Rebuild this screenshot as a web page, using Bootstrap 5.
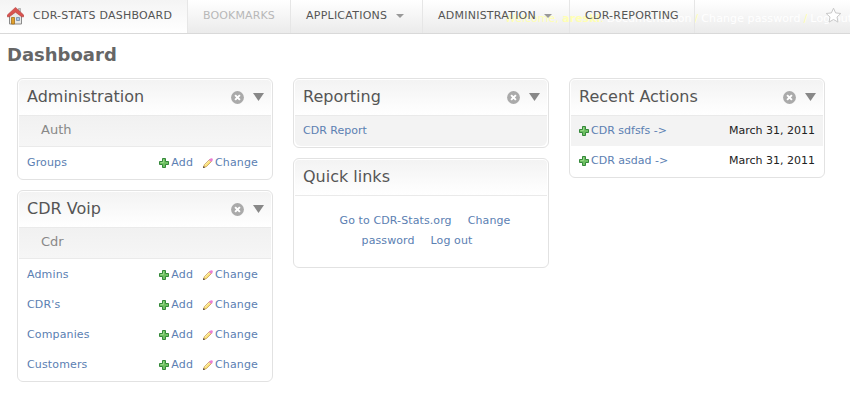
<!DOCTYPE html>
<html lang="en">
<head>
<meta charset="utf-8">
<title>CDR-Stats Dashboard</title>
<link href="https://cdn.jsdelivr.net/npm/bootstrap@5.3.0/dist/css/bootstrap.min.css" rel="stylesheet">
<style>
body{font-family:"DejaVu Sans",sans-serif;font-size:11px;line-height:16px;color:#222;background:#fff;overflow:hidden}
a{color:#5b80b2;text-decoration:none}
.topbar{height:34px;background:linear-gradient(#fff,#ebebeb);border-bottom:1px solid #d9d9d9;position:relative}
.topbar .nav-link{color:#555;padding:8px 15px 9px;height:33px;line-height:16px;border-right:1px solid #e6e6e6;white-space:nowrap;position:relative;z-index:1;letter-spacing:.24px}
.topbar .nav-link.home{width:188px;padding-left:7px;padding-right:0;background:linear-gradient(#f4f4f4,#fff)}
.topbar .nav-link.disabled{color:#b8b8b8;letter-spacing:.14px}
.home svg{margin:-1px 9px 0 0}
.w-book{width:103px}.w-apps{width:132px}.w-admin{width:147px}.w-rep{width:125px}
.caret{display:inline-block;border:4px solid transparent;border-top-color:#999;border-bottom:0;margin-left:9px;vertical-align:1px}
.w-admin .caret{margin-left:8px}
.user-tools{position:absolute;left:505px;top:11px;color:#ffffb3;white-space:nowrap;gap:3px}
.user-tools a{color:#fff}
.user-tools a+span+a{letter-spacing:.1px}
.star{position:absolute;right:8px;top:7px;z-index:2}
h1{font-size:18px;line-height:22px;font-weight:bold;color:#666;margin:10px 0 12px 7px}
.columns{padding-left:17px;gap:20px}
.column-stack{width:256px;gap:10px}
.module{border:1px solid #e2e2e2;border-radius:6px;padding:1px}
.module h2{height:36px;margin:0;padding:0 7px 0 8px;font-size:16px;line-height:20px;font-weight:normal;color:#555;background:linear-gradient(#f3f3f3,#fff);border-bottom:1px solid #eaeaea;border-radius:4px 4px 0 0}
.module h2 span{margin-top:-1px}
.module h2 .toggle{margin-left:9px;margin-top:-1px}
.module h3{height:31px;margin:0;padding:4px 22px;font-size:13px;line-height:20px;font-weight:normal;color:#888;background:linear-gradient(#f1f1f1,#f6f6f6);border-bottom:1px solid #eaeaea}
.item{height:30px;padding:0 8px}
.alt{background:#f3f3f3}
.model-list{padding-top:1px;letter-spacing:.14px}
.model-list .item{padding-right:13px}
.tools{gap:10px}
.item svg{margin-right:2px;flex:none}
.quick{height:70px;padding:15px 29px 0;line-height:20px;text-align:center;letter-spacing:.1px}
.quick a{margin:0 8px}
</style>
<script src="https://cdn.jsdelivr.net/npm/bootstrap@5.3.0/dist/js/bootstrap.bundle.min.js"></script>
</head>
<body>
<svg class="position-absolute" width="0" height="0" xmlns="http://www.w3.org/2000/svg">
  <symbol id="plus" viewBox="0 0 10 10"><path d="M3.5.5h3v3h3v3h-3v3h-3v-3h-3v-3h3z" fill="#6fc062" stroke="#35883b"/><path d="M4.500 1.500V4.500H1.500" fill="none" stroke="#98d888"/></symbol>
  <symbol id="pencil" viewBox="0 0 10 10"><path d="M.5 9.500L1.300 6.700 6.600 1.400 8.600 3.400 3.300 8.700z" fill="#fbe27a" stroke="#b98d4a" stroke-width=".7"/><path d="M1.800 7.100L6.800 2.100" stroke="#fff4b8" stroke-width=".8"/><path d="M5.900 1.900L7.500.500Q8.500-.200 9.400.600 10.200 1.500 9.500 2.500L8.100 4.100z" fill="#ea7ed2"/><path d="M0 10L.6 8 2 9.400z" fill="#43352b"/></symbol>
  <symbol id="close" viewBox="0 0 13 13"><circle cx="6.500" cy="6.500" r="6.400" fill="#aaa"/><path d="M4.100 4.100l4.800 4.800M8.900 4.100L4.100 8.900" stroke="#fff" stroke-width="2"/></symbol>
  <symbol id="down" viewBox="0 0 11 8"><path d="M0 0h11L5.500 8z" fill="#888"/></symbol>
</svg>
<nav class="topbar">
  <div class="nav flex-nowrap">
    <a class="nav-link home d-flex" href="#"><svg width="17" height="18" viewBox="0 0 17 18"><path d="M2.500 8.500L8.500 3l6 5.500V17h-12z" fill="#e9e9e7" stroke="#8b8b8b"/><path d="M11.500 1.500h2V5h-2z" fill="#c9c9c9" stroke="#999" stroke-width=".6"/><path d="M8.500.4L.3 8v1.800h2L8.500 5.200l6.200 4.600h2V8z" fill="#d9534f" stroke="#b03a38" stroke-width=".6"/><path d="M4.500 10.500h3V17h-3z" fill="#e0a02c" stroke="#a5701c" stroke-width=".8"/><path d="M9.500 10.500h3v3h-3z" fill="#a9c8ea" stroke="#6f89a8" stroke-width=".8"/></svg><span>CDR-STATS DASHBOARD</span></a>
    <a class="nav-link disabled w-book" href="#">BOOKMARKS</a>
    <a class="nav-link w-apps" href="#">APPLICATIONS<i class="caret"></i></a>
    <a class="nav-link w-admin" href="#">ADMINISTRATION<i class="caret"></i></a>
    <a class="nav-link w-rep" href="#">CDR-REPORTING</a>
  </div>
  <div class="user-tools d-flex"><span>Welcome, <b>areski</b>.</span><a href="#">Documentation</a><span>/</span><a href="#">Change password</a><span>/</span><a href="#">Log out</a></div>
  <svg class="star" width="17" height="17" viewBox="0 0 17 17"><path d="M8.500 1.200l2.100 4.700 5.200.6-3.800 3.500 1 5.100-4.500-2.600L4 15.100l1-5.100L1.200 6.500l5.200-.6z" fill="#fff" stroke="#c8c8c8" stroke-linejoin="round"/></svg>
</nav>
<h1>Dashboard</h1>
<main class="columns d-flex align-items-start">
  <div class="column-stack d-flex flex-column">
    <section class="module">
      <h2 class="d-flex align-items-center"><span class="me-auto">Administration</span><svg width="13" height="13"><use href="#close"/></svg><svg class="toggle" width="11" height="8"><use href="#down"/></svg></h2>
      <h3>Auth</h3>
      <div class="model-list">
        <div class="item d-flex align-items-center"><a class="me-auto" href="#">Groups</a><div class="tools d-flex"><a class="d-flex align-items-center" href="#"><svg width="10" height="10"><use href="#plus"/></svg>Add</a><a class="d-flex align-items-center" href="#"><svg width="10" height="10"><use href="#pencil"/></svg>Change</a></div></div>
      </div>
    </section>
    <section class="module">
      <h2 class="d-flex align-items-center"><span class="me-auto">CDR Voip</span><svg width="13" height="13"><use href="#close"/></svg><svg class="toggle" width="11" height="8"><use href="#down"/></svg></h2>
      <h3>Cdr</h3>
      <div class="model-list">
        <div class="item d-flex align-items-center"><a class="me-auto" href="#">Admins</a><div class="tools d-flex"><a class="d-flex align-items-center" href="#"><svg width="10" height="10"><use href="#plus"/></svg>Add</a><a class="d-flex align-items-center" href="#"><svg width="10" height="10"><use href="#pencil"/></svg>Change</a></div></div>
        <div class="item d-flex align-items-center"><a class="me-auto" href="#">CDR's</a><div class="tools d-flex"><a class="d-flex align-items-center" href="#"><svg width="10" height="10"><use href="#plus"/></svg>Add</a><a class="d-flex align-items-center" href="#"><svg width="10" height="10"><use href="#pencil"/></svg>Change</a></div></div>
        <div class="item d-flex align-items-center"><a class="me-auto" href="#">Companies</a><div class="tools d-flex"><a class="d-flex align-items-center" href="#"><svg width="10" height="10"><use href="#plus"/></svg>Add</a><a class="d-flex align-items-center" href="#"><svg width="10" height="10"><use href="#pencil"/></svg>Change</a></div></div>
        <div class="item d-flex align-items-center"><a class="me-auto" href="#">Customers</a><div class="tools d-flex"><a class="d-flex align-items-center" href="#"><svg width="10" height="10"><use href="#plus"/></svg>Add</a><a class="d-flex align-items-center" href="#"><svg width="10" height="10"><use href="#pencil"/></svg>Change</a></div></div>
      </div>
    </section>
  </div>
  <div class="column-stack d-flex flex-column">
    <section class="module">
      <h2 class="d-flex align-items-center"><span class="me-auto">Reporting</span><svg width="13" height="13"><use href="#close"/></svg><svg class="toggle" width="11" height="8"><use href="#down"/></svg></h2>
      <div class="item alt d-flex align-items-center rounded-bottom"><a href="#">CDR Report</a></div>
    </section>
    <section class="module">
      <h2 class="d-flex align-items-center"><span>Quick links</span></h2>
      <div class="quick"><a href="#">Go to CDR-Stats.org</a><a href="#">Change password</a><a href="#">Log out</a></div>
    </section>
  </div>
  <div class="column-stack d-flex flex-column">
    <section class="module">
      <h2 class="d-flex align-items-center"><span class="me-auto">Recent Actions</span><svg width="13" height="13"><use href="#close"/></svg><svg class="toggle" width="11" height="8"><use href="#down"/></svg></h2>
      <div class="item alt d-flex align-items-center"><svg width="10" height="10"><use href="#plus"/></svg><a class="me-auto" href="#">CDR sdfsfs -&gt;</a><span>March 31, 2011</span></div>
      <div class="item d-flex align-items-center"><svg width="10" height="10"><use href="#plus"/></svg><a class="me-auto" href="#">CDR asdad -&gt;</a><span>March 31, 2011</span></div>
    </section>
  </div>
</main>
</body>
</html>
